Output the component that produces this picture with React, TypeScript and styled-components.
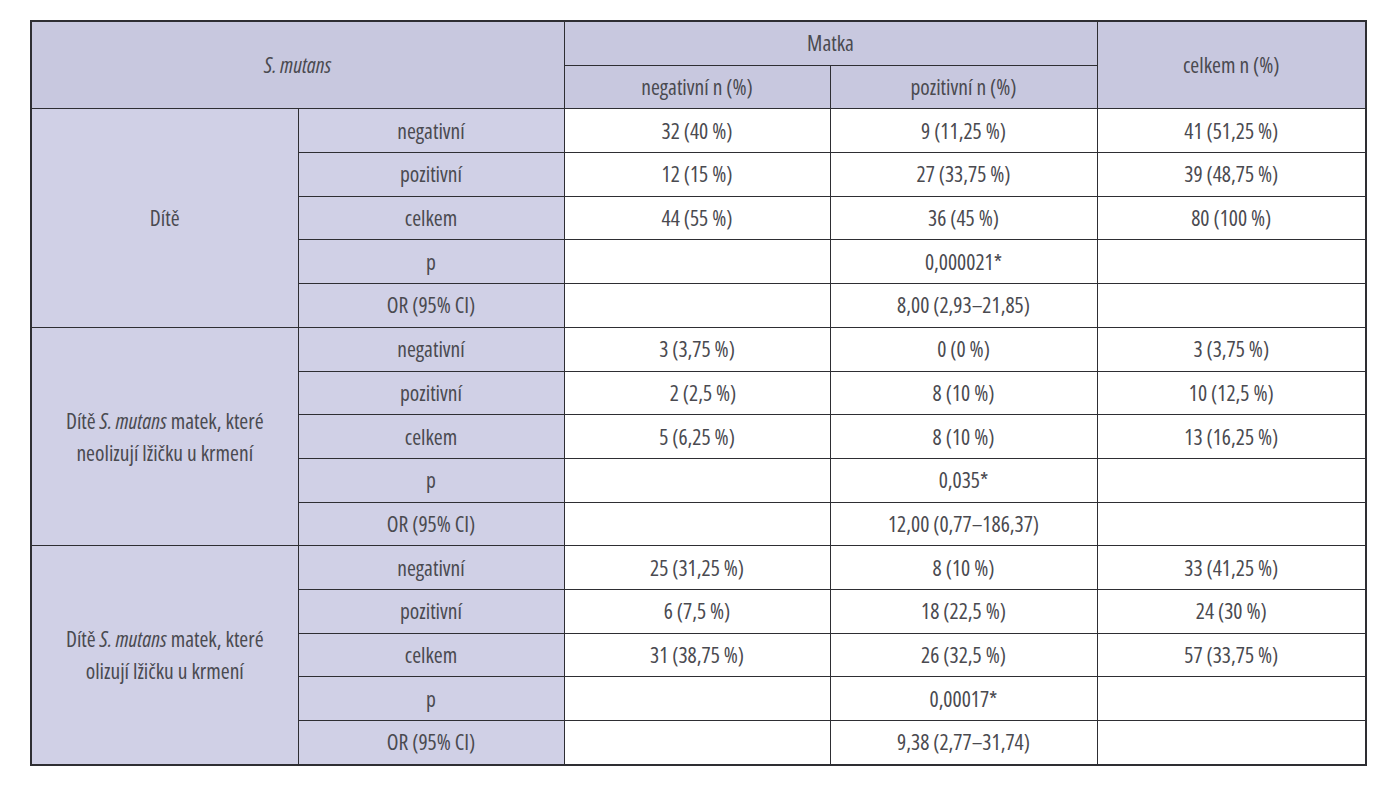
import React from "react";
import styled, { createGlobalStyle, css } from "styled-components";

const Global = createGlobalStyle`
  html, body { margin: 0; padding: 0; background: #ffffff; }
  body { font-family: "Open Sans", "DejaVu Sans", sans-serif; }
`;

const Page = styled.div`
  padding: 20px 30px 0 30px;
`;

const Table = styled.table`
  width: 1335px;
  table-layout: fixed;
  border-collapse: collapse;
  border: 2px solid #2e2e33;
  font-family: "Open Sans", "DejaVu Sans", sans-serif;
  font-stretch: 80%;
  font-size: 21.5px;
  color: #4a4a50;
`;

const Col = styled.col<{ $w: number }>`
  width: ${(p) => p.$w}px;
`;

const cellBase = css`
  height: 42.7px;
  padding: 0 6px;
  border: 1.5px solid #2e2e33;
  text-align: center;
  vertical-align: middle;
  line-height: 30px;
  font-weight: 400;
`;

const HeadCell = styled.th`
  ${cellBase};
  background: #c8c8df;
`;

const Cell = styled.td<{ $label?: boolean }>`
  ${cellBase};
  background: ${(p) => (p.$label ? "#d0d0e6" : "#ffffff")};
`;

const GroupText = styled.span`
  display: inline-block;
  line-height: 32px;
  white-space: nowrap;
`;

type Row = { label: string; a: string; b: string; c: string };

type Group = { title: React.ReactNode; rows: Row[] };

const groups: Group[] = [
  {
    title: "Dítě",
    rows: [
      { label: "negativní", a: "32 (40 %)", b: "9 (11,25 %)", c: "41 (51,25 %)" },
      { label: "pozitivní", a: "12 (15 %)", b: "27 (33,75 %)", c: "39 (48,75 %)" },
      { label: "celkem", a: "44 (55 %)", b: "36 (45 %)", c: "80 (100 %)" },
      { label: "p", a: "", b: "0,000021*", c: "" },
      { label: "OR (95% CI)", a: "", b: "8,00 (2,93–21,85)", c: "" },
    ],
  },
  {
    title: (
      <GroupText>
        Dítě <i>S. mutans</i> matek, které
        <br />
        neolizují lžičku u krmení
      </GroupText>
    ),
    rows: [
      { label: "negativní", a: "3 (3,75 %)", b: "0 (0 %)", c: "3 (3,75 %)" },
      { label: "pozitivní", a: "\u00a0\u00a0\u00a02 (2,5 %)", b: "8 (10 %)", c: "10 (12,5 %)" },
      { label: "celkem", a: "5 (6,25 %)", b: "8 (10 %)", c: "13 (16,25 %)" },
      { label: "p", a: "", b: "0,035*", c: "" },
      { label: "OR (95% CI)", a: "", b: "12,00 (0,77–186,37)", c: "" },
    ],
  },
  {
    title: (
      <GroupText>
        Dítě <i>S. mutans</i> matek, které
        <br />
        olizují lžičku u krmení
      </GroupText>
    ),
    rows: [
      { label: "negativní", a: "25 (31,25 %)", b: "8 (10 %)", c: "33 (41,25 %)" },
      { label: "pozitivní", a: "6 (7,5 %)", b: "18 (22,5 %)", c: "24 (30 %)" },
      { label: "celkem", a: "31 (38,75 %)", b: "26 (32,5 %)", c: "57 (33,75 %)" },
      { label: "p", a: "", b: "0,00017*", c: "" },
      { label: "OR (95% CI)", a: "", b: "9,38 (2,77–31,74)", c: "" },
    ],
  },
];

const widths = [267, 266, 266, 267, 269];

export default function App() {
  return (
    <Page>
      <Global />
      <Table>
        <colgroup>
          {widths.map((w, i) => (
            <Col key={i} $w={w} />
          ))}
        </colgroup>
        <thead>
          <tr>
            <HeadCell colSpan={2} rowSpan={2}>
              <i>S. mutans</i>
            </HeadCell>
            <HeadCell colSpan={2}>Matka</HeadCell>
            <HeadCell rowSpan={2}>celkem n (%)</HeadCell>
          </tr>
          <tr>
            <HeadCell>negativní n (%)</HeadCell>
            <HeadCell>pozitivní n (%)</HeadCell>
          </tr>
        </thead>
        <tbody>
          {groups.map((g, gi) =>
            g.rows.map((r, ri) => (
              <tr key={`${gi}-${ri}`}>
                {ri === 0 && (
                  <Cell $label rowSpan={g.rows.length}>
                    {g.title}
                  </Cell>
                )}
                <Cell $label>{r.label}</Cell>
                <Cell>{r.a}</Cell>
                <Cell>{r.b}</Cell>
                <Cell>{r.c}</Cell>
              </tr>
            ))
          )}
        </tbody>
      </Table>
    </Page>
  );
}
